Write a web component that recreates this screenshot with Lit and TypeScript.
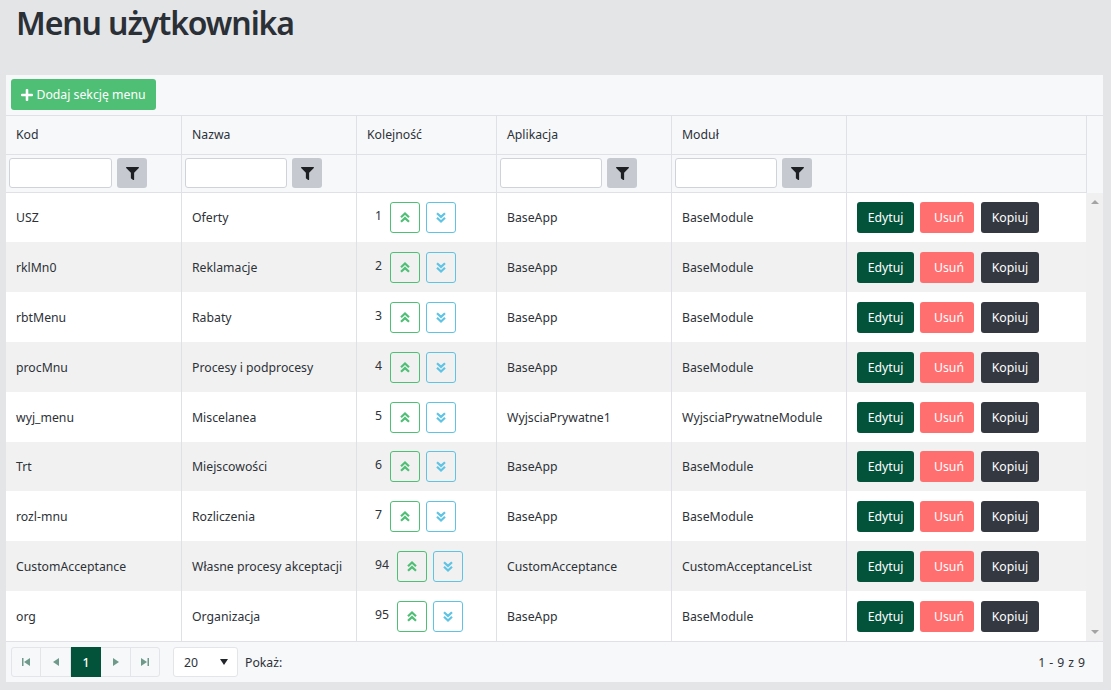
import { LitElement, html, css, svg } from "lit";
import { customElement } from "lit/decorators.js";

const rows = [
  ["USZ", "Oferty", "1", "BaseApp", "BaseModule"],
  ["rklMn0", "Reklamacje", "2", "BaseApp", "BaseModule"],
  ["rbtMenu", "Rabaty", "3", "BaseApp", "BaseModule"],
  ["procMnu", "Procesy i podprocesy", "4", "BaseApp", "BaseModule"],
  ["wyj_menu", "Miscelanea", "5", "WyjsciaPrywatne1", "WyjsciaPrywatneModule"],
  ["Trt", "Miejscowości", "6", "BaseApp", "BaseModule"],
  ["rozl-mnu", "Rozliczenia", "7", "BaseApp", "BaseModule"],
  ["CustomAcceptance", "Własne procesy akceptacji", "94", "CustomAcceptance", "CustomAcceptanceList"],
  ["org", "Organizacja", "95", "BaseApp", "BaseModule"],
];

const funnel = html`<svg class="funnel" viewBox="0 0 512 512"><path fill="currentColor" d="M487.976 0H24.028C2.71 0-8.047 25.866 7.058 40.971L192 225.941V432c0 7.831 3.821 15.17 10.237 19.662l80 55.98C298.02 518.69 320 507.493 320 487.98V225.941l184.947-184.97C520.021 25.896 509.338 0 487.976 0z"/></svg>`;
const plus = html`<svg class="plus" viewBox="0 0 448 512"><path fill="currentColor" d="M416 208H272V64c0-17.67-14.33-32-32-32h-32c-17.67 0-32 14.33-32 32v144H32c-17.67 0-32 14.33-32 32v32c0 17.67 14.33 32 32 32h144v144c0 17.67 14.33 32 32 32h32c17.67 0 32-14.33 32-32V304h144c17.67 0 32-14.33 32-32v-32c0-17.67-14.33-32-32-32z"/></svg>`;
const chevronsUp = html`<svg class="chev" viewBox="0 0 10 11"><path d="M1 5.200l4-3.700 4 3.700M1 9.800l4-3.700 4 3.700" fill="none" stroke="currentColor" stroke-width="2.200"/></svg>`;
const chevronsDown = html`<svg class="chev" viewBox="0 0 10 11"><path d="M1 1.200l4 3.700 4-3.700M1 5.800l4 3.700 4-3.700" fill="none" stroke="currentColor" stroke-width="2.200"/></svg>`;

const pagerIcons = {
  first: svg`<path d="M2 2h1.500v8H2zM10 2v8L4 6z"/>`,
  prev: svg`<path d="M9 2v8L3 6z"/>`,
  next: svg`<path d="M3 2v8l6-4z"/>`,
  last: svg`<path d="M8.500 2H10v8H8.500zM2 2v8l6-4z"/>`,
};

@customElement("app-root")
export class AppRoot extends LitElement {
  static styles = css`
    :host {
      display: block;
      height: 690px;
      overflow: hidden;
      background: #e4e5e7;
      font-family: "Noto Sans", "Open Sans", sans-serif;
      font-size: 12.25px;
      color: #2d3138;
    }
    h1 {
      margin: 0;
      padding: 0 0 0 16px;
      height: 75px;
      font-size: 32px;
      letter-spacing: -1.1px;
      line-height: 46px;
      font-weight: 600;
      color: #2b2f36;
    }
    .card {
      margin: 0 8px 0 6px;
      height: 607px;
      display: flex;
      flex-direction: column;
      background: #f7f8fa;
    }
    .toolbar {
      height: 41px;
      padding: 4px 5px;
      box-sizing: border-box;
      border-bottom: 1px solid #dfe1e6;
      flex: none;
    }
    .btn {
      display: inline-flex;
      align-items: center;
      justify-content: center;
      box-sizing: border-box;
      height: 31px;
      border-radius: 3px;
      color: #fff;
    }
    .add {
      width: 145px;
      background: #4fbf76;
      gap: 3px;
    }
    .plus {
      width: 12px;
      height: 14px;
    }
    .grid {
      display: grid;
      grid-template-columns: 176px 175px 140px 175px 175px 240px 16px;
    }
    .head > div {
      box-sizing: border-box;
      border-right: 1px solid #dfe1e6;
      border-bottom: 1px solid #dfe1e6;
    }
    .head .last {
      border-bottom: none;
      border-right: none;
    }
    .title {
      height: 39px;
      padding: 0 10px 2px;
      display: flex;
      align-items: center;
    }
    .filter {
      height: 38px;
      padding: 3px;
      display: flex;
      gap: 5px;
      align-items: flex-start;
    }
    .filter .box {
      width: 102px;
      height: 30px;
      box-sizing: border-box;
      background: #fff;
      border: 1px solid #cfd3d9;
      border-radius: 3px;
    }
    .filter.wide .box {
      width: 103px;
    }
    .filter .fbtn {
      width: 30px;
      height: 30px;
      background: #c6cad0;
      border-radius: 3px;
      display: flex;
      align-items: center;
      justify-content: center;
      color: #1d1f23;
    }
    .funnel {
      width: 13px;
      height: 13px;
    }
    .body {
      height: 448px;
      flex: none;
      display: flex;
      border-bottom: 1px solid #dfe1e6;
      box-sizing: content-box;
    }
    .rows {
      width: 1080px;
      display: grid;
      grid-template-rows: 49px 50px 50px 50px 50px 49px 50px 50px 50px;
      background: #fff;
    }
    .row {
      display: grid;
      grid-template-columns: 176px 175px 140px 175px 175px 239px;
    }
    .row.alt {
      background: #f1f1f1;
    }
    .row > div {
      box-sizing: border-box;
      border-right: 1px solid #dfe1e6;
      padding: 0 10px;
      display: flex;
      align-items: center;
      white-space: nowrap;
    }
    .row > .actions {
      border-right: none;
      gap: 6px;
    }
    .row > .order {
      padding-left: 18px;
    }
    .num {
      margin-right: 8px;
      position: relative;
      top: -2px;
    }
    .arrow {
      width: 30px;
      height: 31px;
      box-sizing: border-box;
      border-radius: 3px;
      border: 1px solid;
      display: flex;
      align-items: center;
      justify-content: center;
    }
    .arrow.up {
      border-color: #4fbf76;
      color: #4fbf76;
      margin-right: 6px;
    }
    .arrow.down {
      border-color: #5fc3e4;
      color: #5fc3e4;
    }
    .chev {
      width: 10px;
      height: 11px;
    }
    .edit {
      width: 57px;
      background: #03533a;
    }
    .del {
      width: 54px;
      background: #ff6f6f;
      padding-left: 4px;
    }
    .copy {
      width: 58px;
      background: #343841;
      margin-left: 1px;
    }
    .scroll {
      width: 17px;
      background: #f0f0f0;
      display: flex;
      flex-direction: column;
      justify-content: space-between;
      align-items: center;
      padding: 7px 0;
      box-sizing: border-box;
    }
    .scroll i {
      width: 0;
      height: 0;
      border-left: 4px solid transparent;
      border-right: 4px solid transparent;
    }
    .scroll .t {
      border-bottom: 4px solid #a3a3a3;
    }
    .scroll .b {
      border-top: 4px solid #a3a3a3;
    }
    .pager {
      flex: 1;
      display: flex;
      align-items: center;
      padding: 0 18px 0 5px;
    }
    .pages {
      display: flex;
      height: 30px;
      box-sizing: border-box;
      border: 1px solid #e3e5e9;
      border-radius: 3px;
      background: #f7f8fa;
    }
    .pages span {
      width: 30px;
      margin: -1px 0;
      display: flex;
      align-items: center;
      justify-content: center;
      color: #6f9a8b;
      border-right: 1px solid #e3e5e9;
      box-sizing: border-box;
    }
    .pages span:last-child {
      border-right: none;
      width: 28px;
    }
    .pages span.first {
      width: 29px;
    }
    .pages span.on {
      background: #03533a;
      color: #fff;
      border-right: none;
      font-weight: 500;
    }
    .pages svg {
      width: 12px;
      height: 12px;
      fill: currentColor;
    }
    .size {
      margin-left: 13px;
      width: 65px;
      height: 30px;
      box-sizing: border-box;
      background: #fff;
      border: 1px solid #e3e5e9;
      border-radius: 3px;
      display: flex;
      align-items: center;
      justify-content: space-between;
      padding: 0 9px 0 10px;
    }
    .size i {
      width: 0;
      height: 0;
      border-left: 4.500px solid transparent;
      border-right: 4.500px solid transparent;
      border-top: 6px solid #23262b;
    }
    .show {
      margin-left: 7px;
    }
    .count {
      margin-left: auto;
      word-spacing: 0.8px;
    }
  `;

  render() {
    return html`
      <h1>Menu użytkownika</h1>
      <div class="card">
        <div class="toolbar">
          <span class="btn add">${plus}Dodaj sekcję menu</span>
        </div>
        <div class="grid head">
          ${["Kod", "Nazwa", "Kolejność", "Aplikacja", "Moduł", ""].map(
            (t) => html`<div class="title">${t}</div>`
          )}
          <div class="last"></div>
          ${[true, true, false, true, true, false].map(
            (f, i) => html`<div class="filter ${i === 0 ? "wide" : ""}">
              ${f
                ? html`<span class="box"></span><span class="fbtn">${funnel}</span>`
                : ""}
            </div>`
          )}
          <div class="last"></div>
        </div>
        <div class="body">
          <div class="rows">
            ${rows.map(
              (r, i) => html`<div class="row ${i % 2 ? "alt" : ""}">
                <div>${r[0]}</div>
                <div>${r[1]}</div>
                <div class="order">
                  <span class="num">${r[2]}</span>
                  <span class="arrow up">${chevronsUp}</span>
                  <span class="arrow down">${chevronsDown}</span>
                </div>
                <div>${r[3]}</div>
                <div>${r[4]}</div>
                <div class="actions">
                  <span class="btn edit">Edytuj</span>
                  <span class="btn del">Usuń</span>
                  <span class="btn copy">Kopiuj</span>
                </div>
              </div>`
            )}
          </div>
          <div class="scroll"><i class="t"></i><i class="b"></i></div>
        </div>
        <div class="pager">
          <div class="pages">
            <span class="first"><svg viewBox="0 0 12 12">${pagerIcons.first}</svg></span>
            <span><svg viewBox="0 0 12 12">${pagerIcons.prev}</svg></span>
            <span class="on">1</span>
            <span><svg viewBox="0 0 12 12">${pagerIcons.next}</svg></span>
            <span><svg viewBox="0 0 12 12">${pagerIcons.last}</svg></span>
          </div>
          <div class="size">20<i></i></div>
          <span class="show">Pokaż:</span>
          <span class="count">1 - 9 z 9</span>
        </div>
      </div>
    `;
  }
}
